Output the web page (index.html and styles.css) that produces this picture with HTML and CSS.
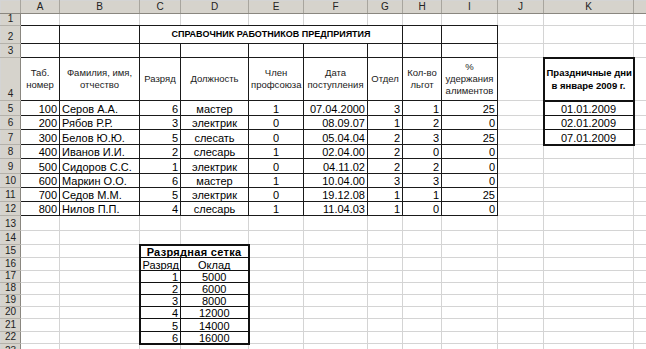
FILE: index.html
```html
<!DOCTYPE html>
<html lang="ru">
<head>
<meta charset="utf-8">
<title>Справочник работников предприятия</title>
<link rel="stylesheet" href="styles.css">
</head>
<body>
<table class="sheet">
<colgroup>
<col class="w-rh"><col class="w-a"><col class="w-b"><col class="w-c"><col class="w-d"><col class="w-e"><col class="w-f"><col class="w-g"><col class="w-h"><col class="w-i"><col class="w-j"><col class="w-k"><col class="w-l">
</colgroup>
<tr class="h-hd">
<th class="corner"></th><th class="ch">A</th><th class="ch">B</th><th class="ch">C</th><th class="ch">D</th><th class="ch">E</th><th class="ch">F</th><th class="ch">G</th><th class="ch">H</th><th class="ch">I</th><th class="ch">J</th><th class="ch">K</th><th class="ch"></th>
</tr>
<tr class="h12">
<th class="rh">1</th><td class="tb"></td><td class="tb"></td><td class="tb"></td><td class="tb"></td><td class="tb"></td><td class="tb"></td><td class="tb"></td><td class="tb"></td><td class="tb"></td><td></td><td></td><td></td>
</tr>
<tr class="h18">
<th class="rh">2</th><td class="t"></td><td class="t"></td><td class="t title" colspan="5">СПРАВОЧНИК РАБОТНИКОВ ПРЕДПРИЯТИЯ</td><td class="t"></td><td class="t"></td><td></td><td></td><td></td>
</tr>
<tr class="h14">
<th class="rh">3</th><td class="t"></td><td class="t"></td><td class="t"></td><td class="t"></td><td class="t"></td><td class="t"></td><td class="t"></td><td class="t"></td><td class="t"></td><td></td><td class="kt-above"></td><td></td>
</tr>
<tr class="h43">
<th class="rh">4</th>
<td class="t hd">Таб.<br>номер</td>
<td class="t hd">Фамилия, имя,<br>отчество</td>
<td class="t hd">Разряд</td>
<td class="t hd">Должность</td>
<td class="t hd">Член<br>профсоюза</td>
<td class="t hd">Дата<br>поступления</td>
<td class="t hd">Отдел</td>
<td class="t hd">Кол-во<br>льгот</td>
<td class="t hd">%<br>удержания<br>алиментов</td>
<td></td>
<td class="k k-head">Праздничные дни<br>в январе 2009 г.</td>
<td></td>
</tr>
<tr class="h15">
<th class="rh">5</th><td class="t r">100</td><td class="t">Серов А.А.</td><td class="t r">6</td><td class="t c">мастер</td><td class="t c">1</td><td class="t r">07.04.2000</td><td class="t r">3</td><td class="t r">1</td><td class="t r">25</td><td></td><td class="k c">01.01.2009</td><td></td>
</tr>
<tr class="h14">
<th class="rh">6</th><td class="t r">200</td><td class="t">Рябов Р.Р.</td><td class="t r">3</td><td class="t c">электрик</td><td class="t c">0</td><td class="t r">08.09.07</td><td class="t r">1</td><td class="t r">2</td><td class="t r">0</td><td></td><td class="k c">02.01.2009</td><td></td>
</tr>
<tr class="h15">
<th class="rh">7</th><td class="t r">300</td><td class="t">Белов Ю.Ю.</td><td class="t r">5</td><td class="t c">слесать</td><td class="t c">0</td><td class="t r">05.04.04</td><td class="t r">2</td><td class="t r">3</td><td class="t r">25</td><td></td><td class="k k-last c">07.01.2009</td><td></td>
</tr>
<tr class="h14">
<th class="rh">8</th><td class="t r">400</td><td class="t">Иванов И.И.</td><td class="t r">2</td><td class="t c">слесарь</td><td class="t c">1</td><td class="t r">02.04.00</td><td class="t r">2</td><td class="t r">0</td><td class="t r">0</td><td></td><td></td><td></td>
</tr>
<tr class="h15">
<th class="rh">9</th><td class="t r">500</td><td class="t">Сидоров С.С.</td><td class="t r">1</td><td class="t c">электрик</td><td class="t c">0</td><td class="t r">04.11.02</td><td class="t r">2</td><td class="t r">2</td><td class="t r">0</td><td></td><td></td><td></td>
</tr>
<tr class="h14">
<th class="rh">10</th><td class="t r">600</td><td class="t">Маркин О.О.</td><td class="t r">6</td><td class="t c">мастер</td><td class="t c">1</td><td class="t r">10.04.00</td><td class="t r">3</td><td class="t r">3</td><td class="t r">0</td><td></td><td></td><td></td>
</tr>
<tr class="h14">
<th class="rh">11</th><td class="t r">700</td><td class="t">Седов М.М.</td><td class="t r">5</td><td class="t c">электрик</td><td class="t c">0</td><td class="t r">19.12.08</td><td class="t r">1</td><td class="t r">1</td><td class="t r">25</td><td></td><td></td><td></td>
</tr>
<tr class="h14">
<th class="rh">12</th><td class="t r">800</td><td class="t">Нилов П.П.</td><td class="t r">4</td><td class="t c">слесарь</td><td class="t c">1</td><td class="t r">11.04.03</td><td class="t r">1</td><td class="t r">0</td><td class="t r">0</td><td></td><td></td><td></td>
</tr>
<tr class="h15">
<th class="rh">13</th><td></td><td></td><td></td><td></td><td></td><td></td><td></td><td></td><td></td><td></td><td></td><td></td>
</tr>
<tr class="h14">
<th class="rh">14</th><td></td><td></td><td></td><td></td><td></td><td></td><td></td><td></td><td></td><td></td><td></td><td></td>
</tr>
<tr class="h13">
<th class="rh">15</th><td></td><td></td><td class="s-title" colspan="2">Разрядная сетка</td><td></td><td></td><td></td><td></td><td></td><td></td><td></td><td></td>
</tr>
<tr class="h13">
<th class="rh">16</th><td></td><td></td><td class="s-l c">Разряд</td><td class="s-r c">Оклад</td><td></td><td></td><td></td><td></td><td></td><td></td><td></td><td></td>
</tr>
<tr class="h12">
<th class="rh">17</th><td></td><td></td><td class="s-l r">1</td><td class="s-r c">5000</td><td></td><td></td><td></td><td></td><td></td><td></td><td></td><td></td>
</tr>
<tr class="h12">
<th class="rh">18</th><td></td><td></td><td class="s-l r">2</td><td class="s-r c">6000</td><td></td><td></td><td></td><td></td><td></td><td></td><td></td><td></td>
</tr>
<tr class="h12">
<th class="rh">19</th><td></td><td></td><td class="s-l r">3</td><td class="s-r c">8000</td><td></td><td></td><td></td><td></td><td></td><td></td><td></td><td></td>
</tr>
<tr class="h12">
<th class="rh">20</th><td></td><td></td><td class="s-l r">4</td><td class="s-r c">12000</td><td></td><td></td><td></td><td></td><td></td><td></td><td></td><td></td>
</tr>
<tr class="h13">
<th class="rh">21</th><td></td><td></td><td class="s-l r">5</td><td class="s-r c">14000</td><td></td><td></td><td></td><td></td><td></td><td></td><td></td><td></td>
</tr>
<tr class="h12">
<th class="rh">22</th><td></td><td></td><td class="s-l s-last r">6</td><td class="s-r s-last c">16000</td><td></td><td></td><td></td><td></td><td></td><td></td><td></td><td></td>
</tr>
<tr class="h14">
<th class="rh">23</th><td></td><td></td><td></td><td></td><td></td><td></td><td></td><td></td><td></td><td></td><td></td><td></td>
</tr>
</table>
</body>
</html>
```

FILE: styles.css
```css
html, body {
  margin: 0;
  padding: 0;
  background: #ffffff;
  overflow: hidden;
}
body {
  width: 646px;
  height: 349px;
  font-family: "Liberation Sans", Arial, sans-serif;
  color: #000;
}
.sheet {
  border-collapse: collapse;
  table-layout: fixed;
  width: 672px;
}
.w-rh { width: 20px; }
.w-a { width: 39px; }
.w-b { width: 80px; }
.w-c { width: 41px; }
.w-d { width: 68px; }
.w-e { width: 55px; }
.w-f { width: 64px; }
.w-g { width: 35px; }
.w-h { width: 39px; }
.w-i { width: 56px; }
.w-j { width: 46px; }
.w-k { width: 90px; }
.w-l { width: 39px; }

.sheet td, .sheet th {
  border: 1px solid #d4d4d4;
  padding: 0 2px 0 2px;
  font-size: 11px;
  line-height: 10px;
  font-weight: normal;
  white-space: nowrap;
  overflow: hidden;
  vertical-align: bottom;
  text-align: left;
}
.h-hd { height: 13px; }
.h12 { height: 12px; }
.h13 { height: 13px; }
.h14 { height: 14px; }
.h15 { height: 15px; }
.h18 { height: 18px; }
.h43 { height: 43px; }

/* headers */
.sheet .corner,
.sheet .ch {
  background: #d6d3cc;
  border-right: 1px solid #a8a59e;
  border-bottom: 1px solid #8a8780;
  text-align: center;
  vertical-align: middle;
  font-size: 10px;
  line-height: 10px;
  color: #222;
  padding: 0;
}
.sheet .rh {
  background: #d6d3cc;
  border-right: 1px solid #8a8780;
  border-bottom: 1px solid #b4b1aa;
  text-align: center;
  font-size: 10px;
  line-height: 10px;
  color: #222;
  padding: 0 0 1px 0;
}

/* main table */
.sheet .tb { border-bottom: 1px solid #1a1a1a; }
.sheet .t {
  border-right: 1px solid #1a1a1a;
  border-bottom: 1px solid #1a1a1a;
  padding-bottom: 1px;
}
.sheet .title {
  text-align: center;
  font-weight: bold;
  font-size: 9px;
  vertical-align: middle;
  padding-bottom: 1px;
}
.sheet .hd {
  text-align: center;
  vertical-align: middle;
  font-size: 9.5px;
  line-height: 12px;
  color: #1a1a1a;
}

/* holidays box */
.sheet .kt-above { border-bottom: 2px solid #111; }
.sheet .k {
  border-left: 2px solid #111;
  border-right: 2px solid #111;
  border-bottom: 1px solid #111;
  padding-bottom: 1px;
}
.sheet .k-head {
  border-bottom: 2px solid #111;
  text-align: center;
  vertical-align: middle;
  font-weight: bold;
  font-size: 9.5px;
  line-height: 13px;
}
.sheet .k-last { border-bottom: 2px solid #111; }

/* grade grid */
.sheet .s-title {
  border: 2px solid #111;
  border-bottom: 1px solid #111;
  text-align: center;
  font-weight: bold;
  font-size: 11px;
  letter-spacing: 0.3px;
}
.sheet .s-l {
  border-left: 2px solid #111;
  border-right: 1px solid #111;
  border-bottom: 1px solid #111;
}
.sheet .s-r {
  border-right: 2px solid #111;
  border-bottom: 1px solid #111;
}
.sheet .s-last { border-bottom: 2px solid #111; }

.sheet .r { text-align: right; }
.sheet .c { text-align: center; }
```
